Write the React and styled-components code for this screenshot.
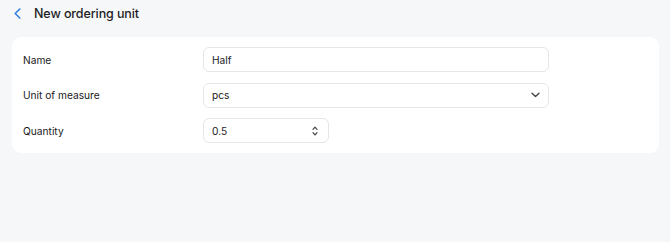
import React from "react";
import styled, { createGlobalStyle } from "styled-components";

const Global = createGlobalStyle`
  html, body { margin: 0; padding: 0; background: #f6f7f9; }
  body { font-family: Inter, "Noto Sans", sans-serif; color: #1d1d1f; }
  * { box-sizing: border-box; }
`;

const Page = styled.div`
  width: 670px;
  height: 242px;
  background: #f6f7f9;
  padding: 0 11px 0 12px;
  display: flex;
  flex-direction: column;
`;

const Header = styled.div`
  height: 37px;
  display: flex;
  align-items: center;
  gap: 13px;
  padding: 0 0 10px 2px;
`;

const BackButton = styled.button`
  border: 0;
  background: none;
  padding: 0;
  display: flex;
  align-items: center;
  color: #2f7fe0;
  cursor: pointer;
`;

const Title = styled.h1`
  margin: 0;
  font-size: 12.5px;
  font-weight: 500;
  letter-spacing: -0.1px;
  color: #1d1d1f;
`;

const Card = styled.div`
  background: #fff;
  border-radius: 9px;
  padding: 10px 11px 10px 11px;
  display: grid;
  grid-template-columns: 180px 346px;
  row-gap: 10.5px;
  align-items: center;
`;

const Label = styled.div`
  font-size: 10.2px;
  color: #1a1a1c;
`;

const Field = styled.div`
  height: 25px;
  width: ${(p) => p.$width || "100%"};
  border: 1px solid #e6e6e8;
  border-radius: 6px;
  background: #fff;
  display: flex;
  align-items: center;
  padding: 0 ${(p) => p.$padRight || "8px"} 0 8px;
  font-size: 10.2px;
  color: #1a1a1c;
`;

const Value = styled.span`
  flex: 1;
`;

const Chevron = () => (
  <svg width="9" height="6" viewBox="0 0 9 6" fill="none">
    <path d="M1 1.2L4.5 4.5L8 1.2" stroke="#45454a" strokeWidth="1.4" strokeLinecap="round" strokeLinejoin="round" />
  </svg>
);

const Stepper = () => (
  <svg width="6" height="12" viewBox="0 0 6 12" fill="none">
    <path d="M1 4.3L3 2.1L5 4.3" stroke="#45454a" strokeWidth="1.2" strokeLinecap="round" strokeLinejoin="round" />
    <path d="M1 7.7L3 9.9L5 7.7" stroke="#45454a" strokeWidth="1.2" strokeLinecap="round" strokeLinejoin="round" />
  </svg>
);

export default function App() {
  return (
    <Page>
      <Global />
      <Header>
        <BackButton aria-label="Back">
          <svg width="7" height="11" viewBox="0 0 7 11" fill="none">
            <path d="M5.8 1L1.2 5.5L5.8 10" stroke="currentColor" strokeWidth="1.6" strokeLinecap="round" strokeLinejoin="round" />
          </svg>
        </BackButton>
        <Title>New ordering unit</Title>
      </Header>
      <Card>
        <Label>Name</Label>
        <Field><Value>Half</Value></Field>
        <Label>Unit of measure</Label>
        <Field><Value>pcs</Value><Chevron /></Field>
        <Label>Quantity</Label>
        <Field $width="126px" $padRight="10px"><Value>0.5</Value><Stepper /></Field>
      </Card>
    </Page>
  );
}
